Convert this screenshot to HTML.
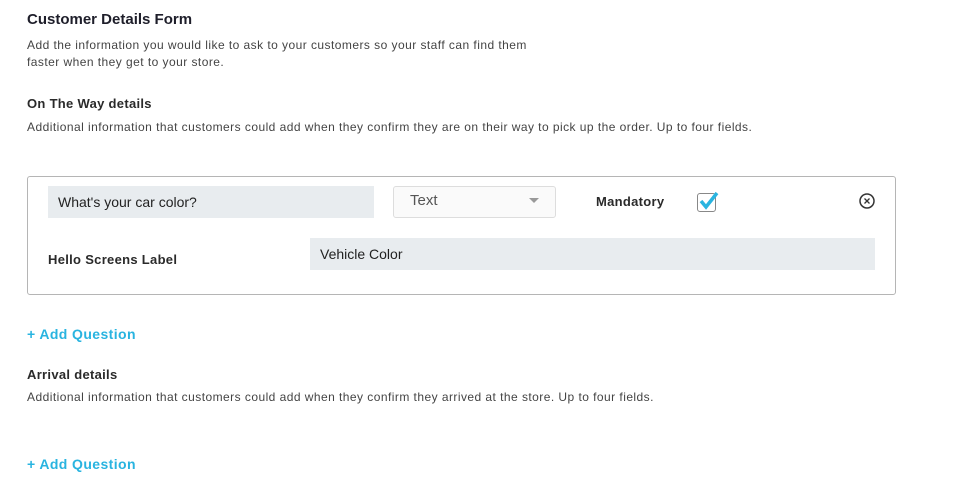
<!DOCTYPE html>
<html><head><style>
body{margin:0;width:972px;height:495px;background:#fff;font-family:"Liberation Sans",sans-serif;position:relative;overflow:hidden;color:#222}
.a{position:absolute;white-space:nowrap}
h1{position:absolute;margin:0;font-size:15px;font-weight:bold;color:#1e1e2a}
.s{font-size:12px;color:#444;letter-spacing:0.45px}
.b{font-size:13px;font-weight:bold;color:#2a2a2a;letter-spacing:0.3px}
.add{font-size:14px;font-weight:bold;color:#29b4e0;letter-spacing:0.4px}
</style></head><body>
<h1 style="left:27px;top:11px">Customer Details Form</h1>
<div class="a s" style="left:27px;top:38px">Add the information you would like to ask to your customers so your staff can find them</div>
<div class="a s" style="left:27px;top:55px">faster when they get to your store.</div>
<div class="a b" style="left:27px;top:96px">On The Way details</div>
<div class="a s" style="left:27px;top:120px">Additional information that customers could add when they confirm they are on their way to pick up the order. Up to four fields.</div>
<div class="a" style="left:27px;top:176px;width:867px;height:117px;border:1px solid #b5b5b5;border-radius:3px"></div>
<div class="a" style="left:48px;top:186px;width:326px;height:32px;background:#e8ecef"></div>
<div class="a" style="left:58px;top:194px;font-size:14px;color:#222">What's your car color?</div>
<div class="a" style="left:393px;top:186px;width:161px;height:30px;border:1px solid #ddd;border-radius:3px;background:#fafafa"></div>
<div class="a" style="left:410px;top:192px;font-size:15px;color:#555">Text</div>
<div class="a" style="left:529px;top:198px;width:0;height:0;border-left:5px solid transparent;border-right:5px solid transparent;border-top:5px solid #999"></div>
<div class="a b" style="left:596px;top:194px">Mandatory</div>
<div class="a" style="left:697px;top:193px;width:17px;height:17px;border:1px solid #888;border-radius:3px;background:#fff"></div>
<svg class="a" style="left:697px;top:190px" width="24" height="22"><path d="M4 11 L9 17 L20 3" stroke="#29b4e0" stroke-width="3.5" fill="none"/></svg>
<svg class="a" style="left:858px;top:192px" width="18" height="18"><circle cx="9" cy="9" r="7" stroke="#333" stroke-width="1.5" fill="none"/><path d="M6.5 6.5L11.5 11.5M11.5 6.5L6.5 11.5" stroke="#333" stroke-width="1.3"/></svg>
<div class="a b" style="left:48px;top:252px">Hello Screens Label</div>
<div class="a" style="left:310px;top:238px;width:565px;height:32px;background:#e8ecef"></div>
<div class="a" style="left:320px;top:246px;font-size:14px;color:#222">Vehicle Color</div>
<div class="a add" style="left:27px;top:326px">+ Add Question</div>
<div class="a b" style="left:27px;top:367px">Arrival details</div>
<div class="a s" style="left:27px;top:390px">Additional information that customers could add when they confirm they arrived at the store. Up to four fields.</div>
<div class="a add" style="left:27px;top:456px">+ Add Question</div>
</body></html>
